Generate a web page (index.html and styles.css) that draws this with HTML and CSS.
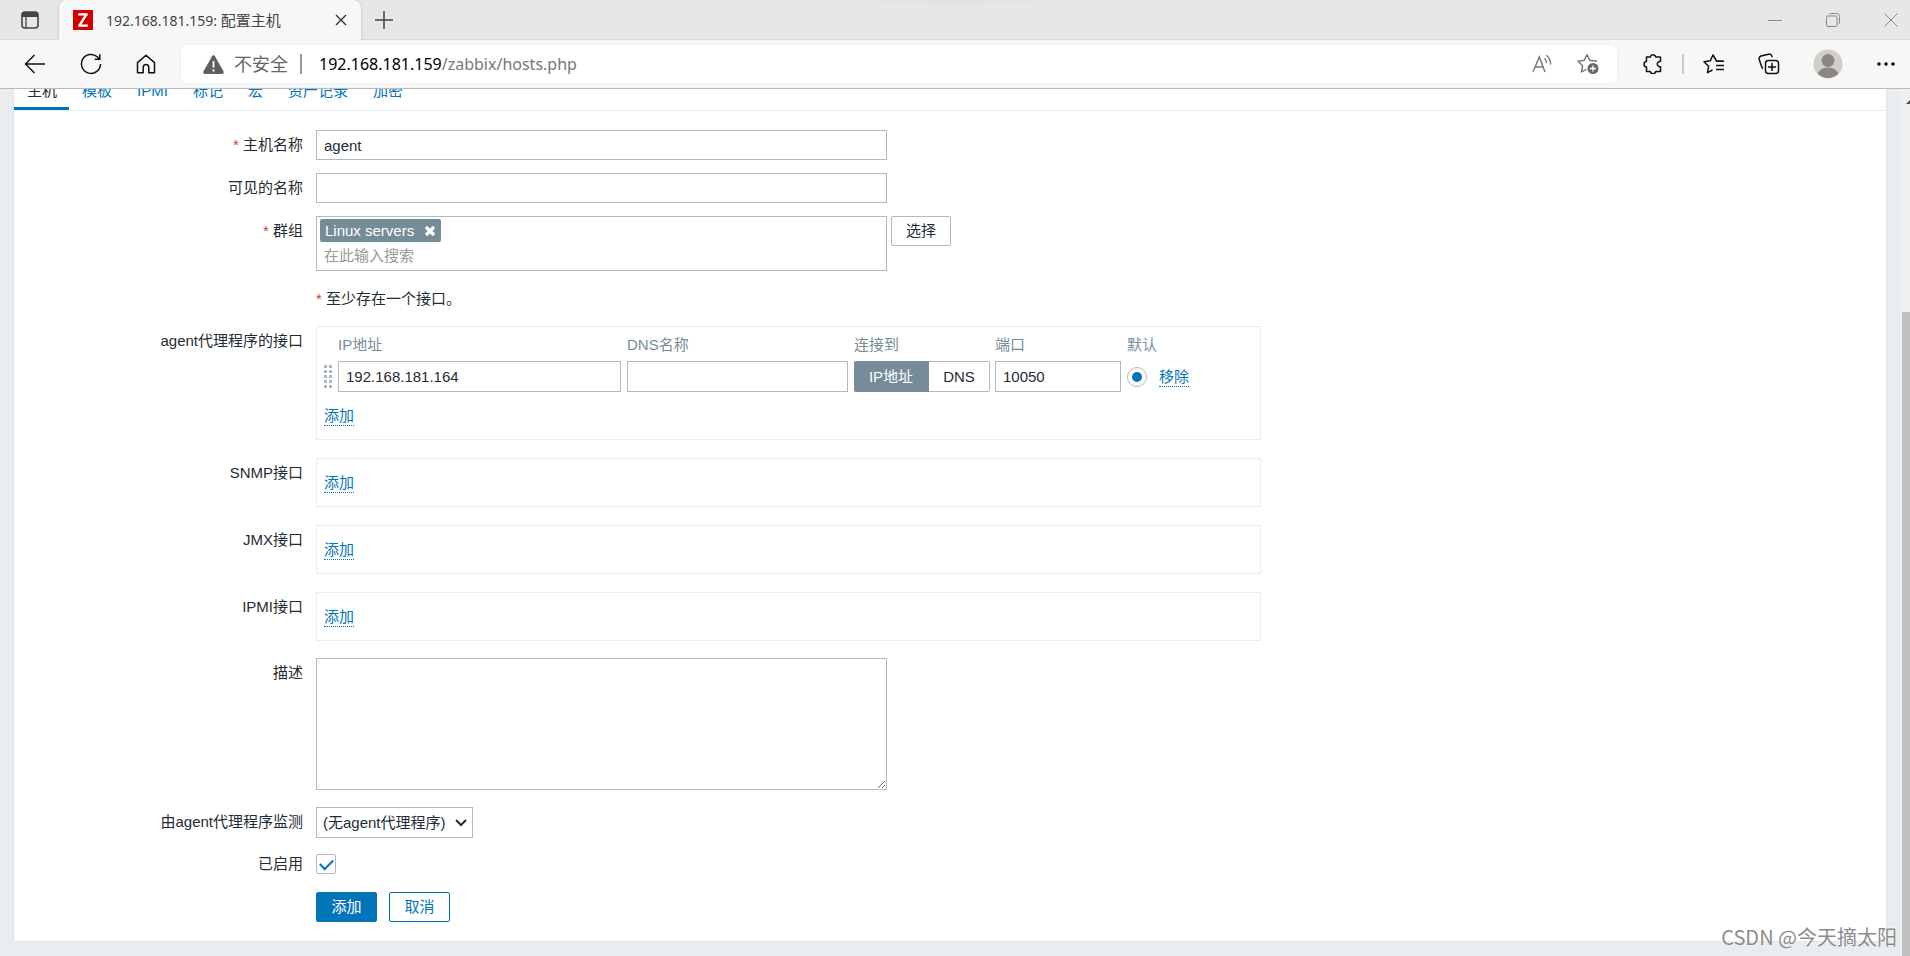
FILE: index.html
```html
<!DOCTYPE html>
<html lang="zh-CN">
<head>
<meta charset="utf-8">
<title>192.168.181.159: 配置主机</title>
<link rel="stylesheet" href="styles.css">
</head>
<body>
<div class="browser">
  <header class="chrome">
    <div class="tabstrip">
      <button class="tab-actions" type="button" aria-label="标签页操作">
        <svg width="18" height="18" viewBox="0 0 18 18"><rect x="1" y="1" width="16" height="16" rx="3" fill="none" stroke="#444" stroke-width="1.6"/><path d="M1 6V4a3 3 0 0 1 3-3h10a3 3 0 0 1 3 3v2z" fill="#444"/><path d="M5 6v11" stroke="#444" stroke-width="1.3"/></svg>
      </button>
      <div class="browser-tab">
        <svg class="favicon" width="20" height="20" viewBox="0 0 20 20"><rect width="20" height="20" fill="#d40000"/><path d="M5.3 4.4h9.4M5.3 15.6h9.6M13.4 4.4 6.4 15.6" fill="none" stroke="#fff" stroke-width="2.4"/></svg>
        <span class="tab-title">192.168.181.159: <span class="tab-title-cjk">配置主机</span></span>
        <button class="tab-close" type="button" aria-label="关闭标签页"><svg width="12" height="12" viewBox="0 0 12 12"><path d="m1 1 10 10M11 1 1 11" stroke="#333" stroke-width="1.4"/></svg></button>
      </div>
      <button class="new-tab" type="button" aria-label="新建标签页"><svg width="18" height="18" viewBox="0 0 18 18"><path d="M9 0v18M0 9h18" stroke="#444" stroke-width="1.5"/></svg></button>
      <div class="window-controls">
        <button type="button" aria-label="最小化"><svg width="14" height="14" viewBox="0 0 14 14"><path d="M0 7.5h14" stroke="#888"/></svg></button>
        <button type="button" aria-label="还原"><svg width="14" height="14" viewBox="0 0 14 14"><rect x=".5" y="3" width="10.500" height="10.500" rx="1.500" fill="none" stroke="#888"/><path d="M3 1.500Q3.400.5 5 .5h5.500a3 3 0 0 1 3 3V9q0 1.500-1 2" fill="none" stroke="#888"/></svg></button>
        <button type="button" aria-label="关闭"><svg width="14" height="14" viewBox="0 0 14 14"><path d="m.5.5 13 13M13.500.5l-13 13" stroke="#888"/></svg></button>
      </div>
    </div>
    <div class="toolbar">
      <div class="nav-buttons">
        <button type="button" aria-label="后退"><svg width="22" height="22" viewBox="0 0 22 22"><path d="M21 11H2M10.500 2 1.500 11l9 9" fill="none" stroke="#111" stroke-width="1.500"/></svg></button>
        <button type="button" aria-label="刷新"><svg width="22" height="22" viewBox="0 0 22 22"><path d="M20.500 11a9.500 9.500 0 1 1-3.200-7.200L19.500 6M19.800 1.200V6.300h-5.100" fill="none" stroke="#111" stroke-width="1.500"/></svg></button>
        <button type="button" aria-label="主页"><svg width="20" height="20" viewBox="0 0 20 20"><path d="M1.500 8.600 10 1.300l8.500 7.300v10.100h-5.700v-5.300a2.800 2.800 0 0 0-5.600 0v5.300H1.500z" fill="none" stroke="#111" stroke-width="1.500" stroke-linejoin="round"/></svg></button>
      </div>
      <div class="address">
        <svg width="21" height="19" viewBox="0 0 21 19"><path d="M9.200 1Q10.500-.8 11.800 1L20.600 16.600Q21.200 18.800 19 19H2Q-.2 18.800.4 16.600z" fill="#5f5f5f"/><path d="M10.500 6v6.500M10.500 14.500v2" stroke="#fff" stroke-width="1.800"/></svg>
        <span class="insecure">不安全</span>
        <span class="address-divider"></span>
        <span class="url"><span class="url-host">192.168.181.159</span>/zabbix/hosts.php</span>
        <button class="address-tool read" type="button" aria-label="大声朗读"><svg width="20" height="20" viewBox="0 0 20 20"><path d="M1 18 7.300 3 13 18M3.200 13h8M12.500 4.300q2.300 2 2 5M14.200 1.200q4.700 3.300 4.300 9.300" fill="none" stroke="#757575" stroke-width="1.400"/></svg></button>
        <button class="address-tool" type="button" aria-label="收藏此页"><svg width="22" height="22" viewBox="0 0 22 22"><path d="m10 1.500 2.700 5.700 7.300 1M10 1.500 7.300 7.200 1 8.200l4.600 4.500L4.400 19l5-2.600" fill="none" stroke="#757575" stroke-width="1.400" stroke-linejoin="round"/><circle cx="16" cy="15.500" r="5.500" fill="#686868"/><path d="M16 12.500v6M13 15.500h6" stroke="#fff" stroke-width="1.300"/></svg></button>
      </div>
      <div class="tools">
        <button class="tool-ext" type="button" aria-label="扩展"><svg width="20" height="20" viewBox="0 0 20 20"><path d="M4 3h3.200a2.900 2.900 0 0 1 5.600 0H17.500v4.500h-1.300a2.700 2.700 0 0 0 0 5.200h1.300V17.500h-4.700a2.900 2.900 0 0 1-5.600 0H3.500v-4.400a3 3 0 0 1 0-5.900V3z" fill="none" stroke="#111" stroke-width="1.500" stroke-linejoin="round"/></svg></button>
        <span class="tool-divider"></span>
        <button class="tool-fav" type="button" aria-label="收藏夹"><svg width="22" height="20" viewBox="0 0 22 20"><path d="M20 7h-6.500L10 1 7.200 6.800 1 7.800l4.600 4.500L4.500 18.700l5-2.700M13 11.500h8M13 15.500h8M13 7.200h8" fill="none" stroke="#111" stroke-width="1.500" stroke-linejoin="round"/></svg></button>
        <button class="tool-col" type="button" aria-label="集锦"><svg width="22" height="22" viewBox="0 0 22 22"><rect x="7.500" y="7.500" width="13" height="13" rx="3" fill="none" stroke="#111" stroke-width="1.500"/><path d="M14 10v8M10 14h8M5 15.500q-1-.5-1.400-2L1.200 6.500Q.6 4 3 3L10.500 1.200q2.300-.5 3.200 1.600l.4 1.500" fill="none" stroke="#111" stroke-width="1.500"/></svg></button>
        <button class="avatar" type="button" aria-label="个人资料"><svg width="30" height="30" viewBox="0 0 30 30"><circle cx="15" cy="15" r="14.500" fill="#d0cec9"/><circle cx="15" cy="11.500" r="6.500" fill="#8b8682"/><path d="M4.500 24.500q3-6 10.500-6t10.500 6a14.500 14.500 0 0 1-21 0z" fill="#8b8682"/></svg></button>
        <button class="tool-more" type="button" aria-label="设置及其他"><svg width="18" height="4" viewBox="0 0 18 4"><circle cx="2" cy="2" r="1.700"/><circle cx="9" cy="2" r="1.700"/><circle cx="16" cy="2" r="1.700"/></svg></button>
      </div>
    </div>
  </header>

  <div class="viewport">
    <main class="page">
      <div class="card">
        <nav class="tabs">
          <a class="tab tab-active" href="#host">主机</a>
          <a class="tab" href="#templates">模板</a>
          <a class="tab" href="#ipmi">IPMI</a>
          <a class="tab" href="#tags">标记</a>
          <a class="tab" href="#macros">宏</a>
          <a class="tab" href="#inventory">资产记录</a>
          <a class="tab" href="#encryption">加密</a>
        </nav>
        <form class="form">
          <div class="row">
            <label class="label required" for="host">主机名称</label>
            <div class="field"><input class="text wide" id="host" type="text" value="agent"></div>
          </div>
          <div class="row">
            <label class="label" for="visible">可见的名称</label>
            <div class="field"><input class="text wide" id="visible" type="text"></div>
          </div>
          <div class="row">
            <label class="label required" for="groups">群组</label>
            <div class="field group-field">
              <div class="multiselect wide">
                <span class="chip">Linux servers<button class="chip-remove" type="button" aria-label="移除 Linux servers"><svg width="12" height="12" viewBox="0 0 12 12"><path d="m2 2 8 8M10 2l-8 8" stroke="#fff" stroke-width="3.200"/></svg></button></span>
                <input class="search" id="groups" type="text" placeholder="在此输入搜索">
              </div>
              <button class="btn btn-grey" type="button">选择</button>
            </div>
          </div>
          <div class="row">
            <span class="label"></span>
            <div class="field note required">至少存在一个接口。</div>
          </div>
          <div class="row row-agent">
            <span class="label">agent代理程序的接口</span>
            <div class="field">
              <div class="box">
                <table class="interfaces">
                  <thead>
                    <tr><th class="col-drag"></th><th class="col-ip">IP地址</th><th class="col-dns">DNS名称</th><th class="col-connect">连接到</th><th class="col-port">端口</th><th class="col-default">默认</th><th></th></tr>
                  </thead>
                  <tbody>
                    <tr>
                      <td><svg class="drag" width="8" height="24" viewBox="0 0 8 24" fill="#acb9c0"><path d="M0 0h3v3H0zM5 0h3v3H5zM0 5h3v3H0zM5 5h3v3H5zM0 10h3v3H0zM5 10h3v3H5zM0 15h3v3H0zM5 15h3v3H5zM0 20h3v3H0zM5 20h3v3H5z"/></svg></td>
                      <td><input class="text" type="text" value="192.168.181.164" aria-label="IP地址"></td>
                      <td><input class="text" type="text" aria-label="DNS名称"></td>
                      <td><div class="segmented"><button class="segment segment-on" type="button">IP地址</button><button class="segment" type="button">DNS</button></div></td>
                      <td><input class="text" type="text" value="10050" aria-label="端口"></td>
                      <td><input class="radio" type="radio" name="default" checked aria-label="默认"></td>
                      <td><a class="link" href="#remove">移除</a></td>
                    </tr>
                  </tbody>
                </table>
                <div class="add-row"><a class="link" href="#add-agent">添加</a></div>
              </div>
            </div>
          </div>
          <div class="row row-box">
            <span class="label">SNMP接口</span>
            <div class="field"><div class="box box-empty"><a class="link" href="#add-snmp">添加</a></div></div>
          </div>
          <div class="row row-box">
            <span class="label">JMX接口</span>
            <div class="field"><div class="box box-empty"><a class="link" href="#add-jmx">添加</a></div></div>
          </div>
          <div class="row row-box">
            <span class="label">IPMI接口</span>
            <div class="field"><div class="box box-empty"><a class="link" href="#add-ipmi">添加</a></div></div>
          </div>
          <div class="row row-tall">
            <label class="label" for="description">描述</label>
            <div class="field"><textarea class="text wide description" id="description"></textarea></div>
          </div>
          <div class="row row-tall">
            <label class="label" for="proxy">由agent代理程序监测</label>
            <div class="field"><div class="select-wrap">
              <select class="select" id="proxy"><option>(无agent代理程序)</option></select>
              <svg class="chevron" width="12" height="8" viewBox="0 0 12 8"><path d="m1 1 5 5 5-5" fill="none" stroke="#1f2c33" stroke-width="2"/></svg>
            </div></div>
          </div>
          <div class="row row-check">
            <label class="label" for="enabled">已启用</label>
            <div class="field"><input class="checkbox" id="enabled" type="checkbox" checked></div>
          </div>
          <div class="row">
            <span class="label"></span>
            <div class="field actions">
              <button class="btn btn-primary" type="button">添加</button>
              <button class="btn btn-outline" type="button">取消</button>
            </div>
          </div>
        </form>
      </div>
    </main>
    <div class="scrollbar">
      <svg width="16" height="5" viewBox="0 0 16 5"><path d="M4 5 9 0l5 5z" fill="#505050"/></svg>
      <div class="thumb"></div>
    </div>
  </div>
  <div class="watermark">CSDN @今天摘太阳</div>
</div>
</body>
</html>
```
FILE: styles.css
```css
* { box-sizing: border-box; }

body {
  margin: 0;
  color: #1f2c33;
  font: 15px/20px "Liberation Sans", "Noto Sans CJK SC", sans-serif;
}

button, input, textarea, select { font: inherit; color: inherit; margin: 0; }
button { padding: 0; border: 0; background: none; cursor: pointer; }
a { text-decoration: none; color: #0275b8; }
svg { display: block; flex: none; }

.browser {
  position: relative;
  display: flex;
  flex-direction: column;
  height: 100vh;
  overflow: hidden;
}

/* Browser frame */
.chrome {
  flex: none;
  border-bottom: 1px solid #b9b9b9;
  background: #f7f7f7;
  font-family: "Noto Sans", "Noto Sans CJK SC", sans-serif;
}

.tabstrip {
  display: flex;
  align-items: center;
  height: 40px;
  padding-left: 21px;
  background: radial-gradient(ellipse 120px 7px at 50% 0, #e1e1e1, #e7e7e7) #e7e7e7;
  border-bottom: 1px solid #d8d8d8;
}

.browser-tab {
  display: flex;
  align-items: center;
  align-self: flex-start;
  width: 302px;
  height: 40px;
  margin-left: 20px;
  padding: 0 14px;
  border-radius: 8px 8px 0 0;
  background: #f7f7f7;
  box-shadow: 0 0 3px rgba(0, 0, 0, .2);
  clip-path: inset(0 -4px 0 -4px);
}

.tab-title { flex: 1; margin-left: 13px; color: #444; font-size: 14px; white-space: nowrap; }
.tab-title-cjk { font-size: 15px; }
.new-tab { margin-left: 14px; }

.window-controls { display: flex; gap: 44px; margin-left: auto; padding-right: 12px; }

.toolbar { display: flex; align-items: center; height: 48px; }
.nav-buttons { display: flex; align-items: center; gap: 34px; width: 181px; padding-left: 24px; }

.address {
  flex: 1;
  display: flex;
  align-items: center;
  height: 38px;
  padding: 0 18px 0 22px;
  border-radius: 6px;
  background: #fff;
  box-shadow: 0 0 3px rgba(0, 0, 0, .06);
}

.insecure { margin-left: 10px; color: #666; font-size: 18px; }
.address-divider { width: 2px; height: 20px; margin: 0 17px 0 12px; background: #999; }
.url { flex: 1; color: #777; font-size: 16px; }
.url-host { color: #000; }
.address-tool.read { margin-right: 25px; }

.tools { display: flex; align-items: center; padding: 0 15px 0 26px; }
.tool-divider { width: 2px; height: 20px; margin: 0 19px; background: #ccc; }
.tool-col { margin-left: 33px; }
.avatar { margin-left: 33px; }
.tool-more { margin-left: 34px; }

/* Page */
.viewport {
  flex: 1;
  display: flex;
  min-height: 0;
  overflow: hidden;
  background: #e9edf0;
}

.page { flex: 1; padding: 0 13px; }

.card {
  margin-top: -14px;
  border: 1px solid #dfe4e7;
  border-top: 0;
  background: #fff;
}

.tabs { display: flex; border-bottom: 1px solid #e9edf0; }
.tab { padding: 0 12px 0 13px; border-bottom: 3px solid transparent; line-height: 32px; }
.tab-active { border-bottom-color: #0275b8; color: #1f2c33; }

.form { padding: 19px 0; }
.row { display: flex; gap: 13px; }
.row + .row { margin-top: 13px; }
.row + .row-agent { margin-top: 12px; }
.row + .row-box { margin-top: 18px; }
.row + .row-tall { margin-top: 17px; }
.row + .row-check { margin-top: 11px; }
.label { flex: none; width: 289px; line-height: 30px; text-align: right; }
.required::before { content: "* "; color: #e33734; }
.field { flex: 1; min-width: 0; }
.note { line-height: 30px; }

.text {
  display: block;
  width: 100%;
  height: 30px;
  padding: 0 7px;
  border: 1px solid #acbbc2;
  border-radius: 0;
  background: #fff;
  outline: 0;
}

.wide { width: 100%; max-width: 571px; }
.description { height: 132px; }

.group-field { display: flex; align-items: flex-start; gap: 4px; }
.multiselect { height: 55px; padding: 2px 3px; border: 1px solid #acbbc2; }
.chip {
  display: flex;
  align-items: center;
  justify-content: space-between;
  width: 121px;
  height: 23px;
  padding: 0 5px;
  border-radius: 2px;
  background: #768d99;
  color: #fff;
}
.search { display: block; width: 100%; height: 27px; padding: 0 4px; border: 0; outline: 0; }
.search::placeholder { color: #999; }

.btn { min-width: 61px; height: 30px; padding: 0 14px; border: 1px solid #0275b8; border-radius: 2px; }
.btn-grey { min-width: 60px; border-color: #acbbc2; }
.btn-primary { background: #0275b8; color: #fff; }
.btn-outline { background: #fff; color: #0275b8; }
.actions { display: flex; gap: 12px; }

.box { max-width: 945px; padding: 4px 7px 0; border: 1px solid #e9edf0; }
.box-empty { height: 49px; padding-top: 14px; }
.link { display: inline-block; border-bottom: 1px dotted #0275b8; line-height: 19px; }

.interfaces { border-collapse: collapse; table-layout: fixed; width: 100%; }
.interfaces th { height: 30px; padding: 0 0 2px; color: #768d99; font-weight: 400; text-align: left; }
.interfaces td { padding: 0 6px 0 0; }
.interfaces td:last-child { padding-right: 0; }
.interfaces .text { height: 31px; }
.col-drag { width: 14px; }
.col-ip { width: 289px; }
.col-dns { width: 227px; }
.col-connect { width: 141px; }
.col-port { width: 132px; }
.col-default { width: 32px; }
.add-row { height: 47px; padding-top: 14px; }

.segmented { display: flex; width: 136px; height: 31px; }
.segment { flex: none; width: 61px; border: 1px solid #acbbc2; border-left: 0; border-radius: 0 2px 2px 0; }
.segment-on { width: 75px; border-color: #768d99; border-radius: 2px 0 0 2px; background: #768d99; color: #fff; }

.radio, .checkbox {
  display: grid;
  place-items: center;
  appearance: none;
  width: 20px;
  height: 20px;
  border: 1px solid #acbbc2;
  background: #fff;
}
.radio { border-radius: 50%; }
.radio:checked::before { content: ""; width: 10px; height: 10px; border-radius: 50%; background: #0275b8; }
.checkbox { margin: 5px 0; border-radius: 2px; }
.checkbox:checked::before {
  content: "";
  width: 11px;
  height: 6px;
  margin-bottom: 2px;
  border: solid #0275b8;
  border-width: 0 0 2px 2px;
  transform: rotate(-45deg);
}

.select-wrap { position: relative; width: 157px; }
.select {
  display: block;
  appearance: none;
  width: 100%;
  height: 31px;
  padding: 0 24px 0 6px;
  border: 1px solid #acbbc2;
  border-radius: 0;
  background: #fff;
}
.chevron { position: absolute; top: 12px; right: 6px; pointer-events: none; }

.scrollbar { width: 10px; padding: 10px 0 0 2px; overflow: hidden; background: #f0f0f0; }
.thumb { height: 100%; margin-top: 208px; background: #c1c1c1; }

.watermark {
  position: absolute;
  right: 13px;
  bottom: 5px;
  color: #8c8c8c;
  font-family: "Noto Sans CJK SC", sans-serif;
  font-size: 20px;
  line-height: 28px;
  text-shadow: -1px -1px 0 rgba(255, 255, 255, .8);
}
```
